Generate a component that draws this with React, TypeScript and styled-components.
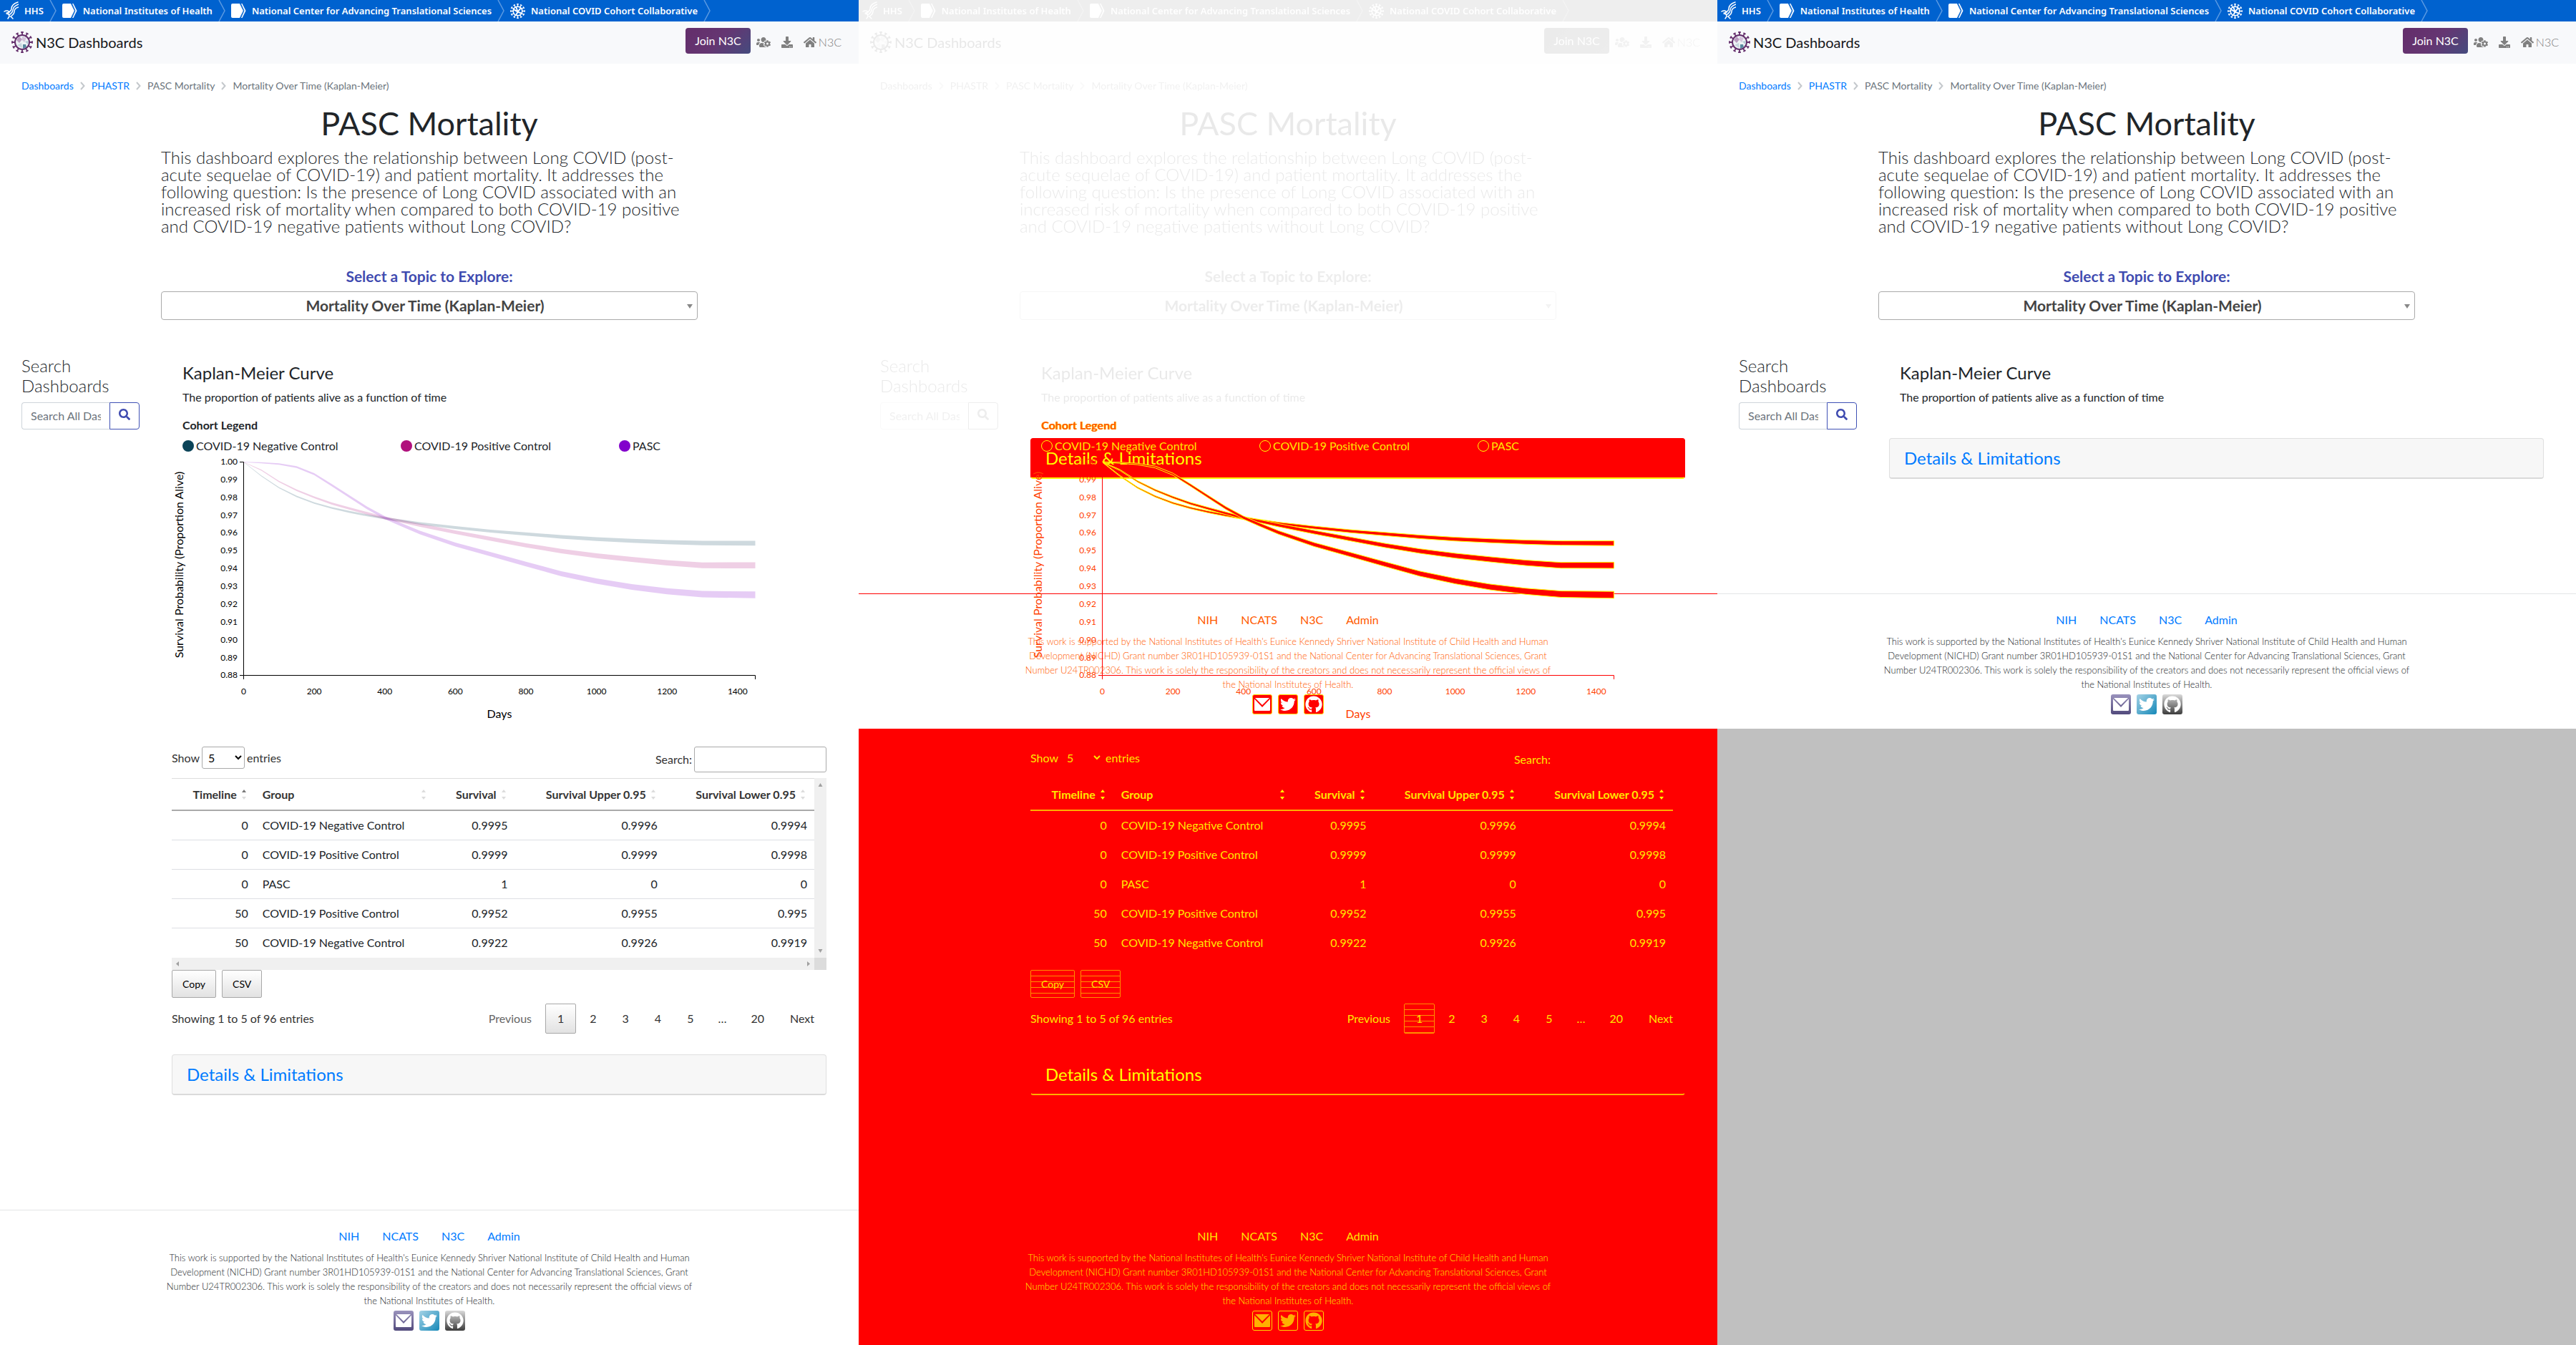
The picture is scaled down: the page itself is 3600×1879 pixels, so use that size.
import React, { useId } from 'react';
import styled, { createGlobalStyle, css, ThemeProvider, useTheme } from 'styled-components';
import { FaUsersCog, FaDownload, FaHome, FaSearch, FaTwitter, FaGithub } from 'react-icons/fa';

/* ---------- tones ---------- */

const plain = {
  ink: '#212529',
  soft: '#333333',
  black: '#000000',
  link: '#007bff',
  muted: '#666666',
  legend: '#212529',
  shadow: 'none',
  line: '#dddddd',
  rowLine: '#dddfe3',
  headLine: '#aaaaaa',
  control: '#aaaaaa',
  controlBg: '#ffffff',
  button: 'linear-gradient(to bottom, #ffffff, #e2e2e2)',
  buttonLine: '#a8a8a8',
  card: '#f7f7f7',
  cardLine: '#dfdfdf',
  cardFoot: '#dadada',
  rule: '#e4e5e6',
  axis: '#000000',
  sort: '#dcdcdc',
  sortOn: '#777777',
  bar: '#f0f0f0',
  barCorner: '#dcdcdc',
  barArrow: '#a0a0a0',
  ribbonOpacity: 0.2,
  ribbonEdge: 'none',
  flat: '',
};

type Tone = typeof plain;

const changed: Tone = {
  ...plain,
  ink: '#ff5a00',
  soft: '#ff5a00',
  black: '#ff4000',
  link: '#ff5a00',
  muted: '#ff5a00',
  legend: '#ffe600',
  shadow: '1px 0 0 #ffe000',
  rule: '#ff0000',
  axis: '#ff0000',
  card: '#ff0000',
  cardLine: '#ff0000',
  cardFoot: '#ffff00',
  ribbonOpacity: 1,
  ribbonEdge: '#ffff00',
  flat: '#ff0000',
};

const missing: Tone = {
  ...changed,
  ink: '#ffe600',
  soft: '#ffe600',
  black: '#ffe600',
  link: '#ffe600',
  muted: '#ffe600',
  shadow: 'none',
  line: 'transparent',
  rowLine: 'transparent',
  headLine: '#ffb000',
  cardFoot: '#ffb000',
  control: 'transparent',
  controlBg: 'transparent',
  button: 'repeating-linear-gradient(to bottom, #ff0000 0 7px, #ff9000 7px 8px)',
  buttonLine: '#ff9000',
  card: 'transparent',
  cardLine: 'transparent',
  rule: 'transparent',
  sort: '#ffff00',
  sortOn: '#ffff00',
  bar: 'transparent',
  barCorner: 'transparent',
  barArrow: 'transparent',
};

const t = (key: keyof Tone) => ({ theme }: { theme: any }) => theme[key];

const Global = createGlobalStyle`
  *, *::before, *::after { box-sizing: border-box; }
  body {
    margin: 0;
    background: #ffffff;
    font-family: Lato, "Open Sans", "Liberation Sans", sans-serif;
    font-size: 16px;
    line-height: 24px;
    color: #212529;
  }
  h1, h2, h3, p, ul, ol { margin: 0; padding: 0; font-weight: 400; }
  a { text-decoration: none; }
  button, input, select { font: inherit; margin: 0; }
`;

/* ---------- frame ---------- */

const Board = styled.main`
  display: grid;
  grid-template-columns: repeat(3, minmax(0, 1fr));
  min-height: 100vh;
`;

const Panel = styled.section`
  display: flex;
  flex-direction: column;
`;

const Stack = styled.section`
  display: grid;
  grid-template-columns: minmax(0, 1fr);
  & > * { grid-area: 1 / 1; }
`;

const Filler = styled.div<{ $color: string }>`
  flex: 1;
  background: ${p => p.$color};
`;

const Part = styled.div<{ $look: 'shown' | 'ghost' | 'hidden' }>`
  ${p => p.$look === 'ghost' && css`filter: grayscale(1) opacity(0.1);`}
  ${p => p.$look === 'hidden' && css`visibility: hidden;`}
`;

/* ---------- agency bar ---------- */

const AgencyBar = styled.nav`
  display: flex;
  height: 30px;
  background: #0062cf;
  overflow: hidden;
`;

const Agency = styled.a`
  display: flex;
  align-items: center;
  gap: 8px;
  padding-left: 8px;
  color: #ffffff;
  font: 600 13px/18px "Noto Sans", "Open Sans", sans-serif;
  white-space: nowrap;
  &:first-child { padding-left: 5px; }
`;

const Divider = () => (
  <svg width="10" height="30" viewBox="0 0 10 30" fill="none" stroke="#5b9ae2" strokeWidth="1.5">
    <path d="M1 0 9 15 1 30" />
  </svg>
);

const Eagle = () => (
  <svg width="21" height="26" viewBox="0 0 21 26" fill="none" stroke="#fff" strokeWidth="1.5" strokeLinecap="round">
    <path d="M20 1C14 3 11 6 11 10c0 3-2 4-4 5" />
    <path d="M21 4c-5 2-8 4-8 8 0 3-2 4-4 6" />
    <path d="M21 8c-4 1-6 3-6 6s-2 5-5 7" />
    <path d="M1 14c3-2 6-1 7 1l-3 1c2 1 3 3 3 5l-2 3" />
    <path d="M10 21l3 3M4 17l4 1" />
  </svg>
);

const Tag = () => (
  <svg width="21" height="20" viewBox="0 0 21 20">
    <path d="M0 2Q0 0 2 0H12L17 10 12 20H2Q0 20 0 18Z" fill="#fff" />
    <path d="M14 0H15.500L20.500 10 15.500 20H14L18.500 10Z" fill="#fff" />
    <path d="M12.500 0 17.500 10 12.500 20" fill="none" stroke="#2f7fd8" />
  </svg>
);

const spokes = Array.from({ length: 12 }, (_, i) => i * 30);

const WhiteVirus = () => (
  <svg width="21" height="21" viewBox="-10 -10 20 20" stroke="#fff" fill="none">
    {spokes.map(a => (
      <path key={a} d="M0-6V-9M-1.300-9.300H1.300" transform={`rotate(${a})`} strokeWidth="1.300" />
    ))}
    <circle r="6" strokeWidth="1.500" />
    <path d="M-5-2 0 1 4-4M0 1-2 5M0 1 5 3M-2-5 0 1" strokeWidth="1.800" />
  </svg>
);

const VirusLogo = () => (
  <svg width="30" height="30" viewBox="-15 -15 30 30" stroke="#642f6c" fill="none">
    {spokes.map(a => (
      <path key={a} d="M0-10V-14M-1.800-14H1.800" transform={`rotate(${a})`} strokeWidth="1.800" />
    ))}
    <circle r="10" strokeWidth="2" fill="#eef3f5" />
    <path d="M-8-3-4-8 0-4-4 1Z" fill="#b99cc0" stroke="none" />
    <path d="M0-8 6-6 3 0 0-3Z" fill="#d3c2da" stroke="none" />
    <path d="M-7 4-1 1 0 8Z" fill="#c6d7de" stroke="none" />
    <path d="M1 3 5 3 6 7 1 9Z" fill="#5a8aa0" stroke="none" />
    <path d="M4-1 9-2 8 3Z" fill="#b5cad6" stroke="none" />
  </svg>
);

/* ---------- site bar ---------- */

const SiteBar = styled.header`
  display: flex;
  align-items: flex-start;
  justify-content: space-between;
  height: 59px;
  padding: 9px 24px 0 16px;
  background: #f8f9fb;
`;

const Brand = styled.a`
  display: flex;
  align-items: center;
  gap: 4px;
  padding-top: 5px;
  color: #16181b;
  font-size: 20px;
  line-height: 30px;
`;

const SiteLinks = styled.div`
  display: flex;
  align-items: center;
`;

const Join = styled.button`
  height: 36px;
  padding: 0 13px;
  margin-right: 8px;
  border: 0;
  border-radius: 4px;
  background: linear-gradient(135deg, #642f6c 10%, #653672 50%, #454b7e);
  color: #ffffff;
`;

const SiteLink = styled.a`
  display: flex;
  align-items: center;
  gap: 3px;
  padding-top: 3px;
  margin-right: 15px;
  color: #808080;
  font-weight: 300;
  &:last-child { margin-right: 0; }
`;

/* ---------- intro ---------- */

const Crumbs = styled.ol`
  display: flex;
  align-items: center;
  gap: 9px;
  padding: 20px 30px 0;
  list-style: none;
  font-size: 14px;
  line-height: 21px;
  color: #6c757d;
  li { display: flex; align-items: center; gap: 9px; }
  a { color: #007bff; }
`;

const CrumbArrow = () => (
  <svg width="7" height="12" viewBox="0 0 7 12" fill="none" stroke="#c4c8cc" strokeWidth="2">
    <path d="M1 1 5.500 6 1 11" />
  </svg>
);

const Intro = styled.div`
  max-width: 750px;
  margin: 0 auto;
  padding-top: 15px;
`;

const Title = styled.h1`
  text-align: center;
  font-size: 45px;
  line-height: 54px;
`;

const Lede = styled.p`
  padding-top: 9px;
  font-size: 24px;
  line-height: 24px;
  font-weight: 300;
`;

const TopicLabel = styled.label`
  display: block;
  padding: 46px 0 9px;
  text-align: center;
  font-size: 21px;
  font-weight: 700;
  color: #3f4bb0;
`;

const TopicBox = styled.div`
  position: relative;
  svg { position: absolute; right: 7px; top: 18px; pointer-events: none; }
`;

const TopicSelect = styled.select`
  width: 100%;
  height: 40px;
  padding: 0 20px 0 8px;
  appearance: none;
  border: 1px solid #aaaaaa;
  border-radius: 4px;
  background: #ffffff;
  text-align-last: center;
  font-size: 21px;
  font-weight: 700;
  color: #444444;
`;

/* ---------- body columns ---------- */

const Columns = styled.div`
  display: grid;
  grid-template-columns: 165px minmax(0, 1fr);
  gap: 45px;
  padding: 50px 45px 0 30px;
`;

const SearchTitle = styled.h2`
  font-size: 24px;
  line-height: 28px;
  font-weight: 300;
  padding-bottom: 9px;
`;

const SearchRow = styled.div`
  display: flex;
  height: 38px;
`;

const SearchInput = styled.input`
  flex: 1;
  min-width: 0;
  padding: 0 12px;
  border: 1px solid #ced4da;
  border-right: 0;
  border-radius: 4px 0 0 4px;
  &::placeholder { color: #6c757d; opacity: 1; }
`;

const SearchButton = styled.button`
  width: 42px;
  padding: 0;
  border: 1px solid #3f51b5;
  border-radius: 0 4px 4px 0;
  background: #ffffff;
  color: #3f4bb0;
`;

const Lead = styled.div`
  padding: 9px 15px 0;
`;

const ChartTitle = styled.h3`
  font-size: 24px;
  line-height: 29px;
  padding-bottom: 8px;
`;

const LegendBox = styled.div`
  padding: 14px 0 0 15px;
  color: ${t('ink')};
`;

const LegendTitle = styled.p`
  font-weight: 700;
  text-shadow: ${t('shadow')};
`;

const LegendList = styled.ul`
  display: grid;
  grid-template-columns: repeat(3, 305px);
  padding-top: 5px;
  list-style: none;
  color: ${t('legend')};
  li { display: flex; align-items: center; gap: 3px; }
`;

const Dot = styled.span<{ $color: string }>`
  width: 16px;
  height: 16px;
  border-radius: 8px;
  background: ${p => p.theme.flat || p.$color};
  ${p => p.theme.flat && css`border: 1px solid #ffff00;`}
`;

const ChartSvg = styled.svg`
  display: block;
  width: 100%;
  height: auto;
  margin-bottom: 31px;
  font-family: Lato, sans-serif;
`;

/* ---------- chart ---------- */

const days = [0, 50, 100, 150, 200, 250, 300, 350, 400, 450, 500, 600, 700, 800, 900, 1000, 1100, 1200, 1300, 1450];

const cohorts = [
  { name: 'COVID-19 Negative Control', color: '#0b4358', spread: 6,
    v: [1, 0.9922, 0.9856, 0.9807, 0.977, 0.9742, 0.972, 0.9701, 0.9684, 0.967, 0.9655, 0.9632, 0.9612, 0.9596, 0.958, 0.9567, 0.9558, 0.955, 0.9545, 0.9544] },
  { name: 'COVID-19 Positive Control', color: '#b0107c', spread: 8,
    v: [1, 0.9955, 0.9891, 0.9842, 0.9802, 0.9767, 0.9739, 0.9712, 0.9686, 0.9666, 0.9645, 0.9606, 0.9569, 0.9532, 0.95, 0.9474, 0.9453, 0.9434, 0.942, 0.942] },
  { name: 'PASC', color: '#8200cc', spread: 9,
    v: [1, 0.9996, 0.9989, 0.9972, 0.9932, 0.987, 0.9806, 0.9742, 0.9688, 0.9645, 0.9604, 0.9537, 0.9482, 0.9427, 0.9373, 0.9331, 0.9298, 0.9274, 0.9258, 0.9254] },
];

const xAt = (d: number) => 100.5 + d * 0.4931;
const yAt = (v: number) => 10.5 + (1 - v) * 2487;

const ribbon = (v: number[], spread: number) => {
  const half = (i: number) => 0.3 + (spread / 2) * Math.pow(days[i] / 1450, 0.7);
  const top = v.map((y, i) => `${xAt(days[i]).toFixed(1)},${(yAt(y) - half(i)).toFixed(1)}`);
  const low = v.map((y, i) => `${xAt(days[i]).toFixed(1)},${(yAt(y) + half(i)).toFixed(1)}`).reverse();
  return [...top, ...low].join(' ');
};

const Chart = () => {
  const tone = useTheme() as Tone;
  return (
    <ChartSvg viewBox="0 0 915 377" role="img" aria-label="Kaplan-Meier survival curves">
      {cohorts.map(c => (
        <polygon key={c.name} points={ribbon(c.v, c.spread)} fill={tone.flat || c.color}
          fillOpacity={tone.ribbonOpacity} stroke={tone.ribbonEdge} />
      ))}
      <path d="M95 10.500H100.500V308.500H95M100.500 314V308.500H815.500V314" fill="none" stroke={tone.axis} />
      <g fontSize="12" fill={tone.black}>
        {Array.from({ length: 13 }, (_, i) => (
          <text key={i} x="92" y={14 + i * 24.87} textAnchor="end">{(1 - i / 100).toFixed(2)}</text>
        ))}
        {Array.from({ length: 8 }, (_, i) => (
          <text key={i} x={xAt(i * 200)} y="335" textAnchor="middle">{i * 200}</text>
        ))}
      </g>
      <g fontSize="16" fill={tone.black} textAnchor="middle">
        <text x="458" y="368">Days</text>
        <text transform="translate(16 154) rotate(-90)">Survival Probability (Proportion Alive)</text>
      </g>
    </ChartSvg>
  );
};

/* ---------- table ---------- */

const Tools = styled.div`
  display: flex;
  justify-content: space-between;
  align-items: flex-start;
  padding-bottom: 8px;
  color: ${t('soft')};
  label { display: flex; align-items: center; gap: 3px; }
`;

const CountSelect = styled.select`
  width: 60px;
  height: 31px;
  padding: 4px;
  border: 1px solid ${t('control')};
  border-radius: 3px;
  background: ${t('controlBg')};
  color: ${t('black')};
`;

const FilterInput = styled.input`
  width: 185px;
  height: 36px;
  padding: 5px;
  border: 1px solid ${t('control')};
  border-radius: 3px;
  background: ${t('controlBg')};
`;

const Scroller = styled.div`
  display: grid;
  grid-template-columns: minmax(0, 1fr) 17px;
  grid-template-rows: auto 17px;
`;

const Track = styled.div<{ $row?: boolean }>`
  display: flex;
  flex-direction: ${p => (p.$row ? 'row' : 'column')};
  justify-content: space-between;
  align-items: center;
  padding: ${p => (p.$row ? '0 5px' : '6px 0')};
  background: ${t('bar')};
  color: ${t('barArrow')};
`;

const TrackCorner = styled.div`
  background: ${t('barCorner')};
`;

const Arrow = ({ d }: { d: string }) => (
  <svg width="7" height="7" viewBox="0 0 7 7" fill="currentColor"><path d={d} /></svg>
);

const Table = styled.table`
  width: 100%;
  table-layout: fixed;
  border-collapse: separate;
  border-spacing: 0;
  border-top: 1px solid ${t('line')};
  color: ${t('ink')};
`;

const Th = styled.th<{ $w: string; $left?: boolean }>`
  width: ${p => p.$w};
  height: 45px;
  padding: 0 12px 0 10px;
  border-bottom: 2px solid ${t('headLine')};
  font-weight: 700;
  color: ${t('soft')};
  & > span {
    display: flex;
    align-items: center;
    gap: 6px;
    justify-content: ${p => (p.$left ? 'space-between' : 'flex-end')};
    white-space: nowrap;
  }
`;

const Td = styled.td<{ $left?: boolean }>`
  height: 41px;
  padding: 0 10px;
  border-bottom: 1px solid ${t('rowLine')};
  text-align: ${p => (p.$left ? 'left' : 'right')};
  tr:last-child > & { border-bottom-color: transparent; }
`;

const Sort = ({ on }: { on?: boolean }) => {
  const tone = useTheme() as Tone;
  return (
    <svg width="8" height="14" viewBox="0 0 8 14">
      <path d="M4 0 7 4H1Z" fill={on ? tone.sortOn : tone.sort} />
      <path d="M4 14 1 10H7Z" fill={tone.sort} />
    </svg>
  );
};

const columns = [
  { name: 'Timeline', w: '13%', on: true },
  { name: 'Group', w: '28%', left: true },
  { name: 'Survival', w: '12.4%' },
  { name: 'Survival Upper 0.95', w: '23.3%' },
  { name: 'Survival Lower 0.95', w: '23.3%' },
];

const rows = [
  ['0', 'COVID-19 Negative Control', '0.9995', '0.9996', '0.9994'],
  ['0', 'COVID-19 Positive Control', '0.9999', '0.9999', '0.9998'],
  ['0', 'PASC', '1', '0', '0'],
  ['50', 'COVID-19 Positive Control', '0.9952', '0.9955', '0.995'],
  ['50', 'COVID-19 Negative Control', '0.9922', '0.9926', '0.9919'],
];

const Exports = styled.div`
  display: flex;
  gap: 8px;
  padding-bottom: 8px;
`;

const ExportButton = styled.button`
  height: 39px;
  padding: 0 14px;
  border: 1px solid ${t('buttonLine')};
  border-radius: 2px;
  background: ${t('button')};
  color: ${t('black')};
  font-size: 14px;
`;

const Foot = styled.div`
  display: flex;
  align-items: center;
  justify-content: space-between;
  color: ${t('soft')};
`;

const Pager = styled.div`
  display: flex;
  gap: 2px;
  align-items: center;
`;

const Ellipsis = styled.span`
  padding: 0 15px;
`;

const PageButton = styled.button<{ $on?: boolean; $dim?: boolean }>`
  height: 42px;
  padding: 0 16px;
  border: 1px solid ${p => (p.$on ? p.theme.buttonLine : 'transparent')};
  border-radius: 2px;
  background: ${p => (p.$on ? p.theme.button : 'transparent')};
  color: ${p => (p.$dim ? p.theme.muted : p.theme.soft)};
`;

const DataTable = () => {
  const id = useId();
  return (
    <>
      <Tools>
        <label htmlFor={`${id}-n`}>
          Show
          <CountSelect id={`${id}-n`} defaultValue="5"><option>5</option><option>10</option></CountSelect>
          entries
        </label>
        <label htmlFor={`${id}-f`}>Search:<FilterInput id={`${id}-f`} /></label>
      </Tools>
      <Scroller>
        <Table>
          <thead>
            <tr>
              {columns.map(c => (
                <Th key={c.name} $w={c.w} $left={c.left}><span>{c.name}<Sort on={c.on} /></span></Th>
              ))}
            </tr>
          </thead>
          <tbody>
            {rows.map((r, i) => (
              <tr key={i}>{r.map((v, j) => <Td key={j} $left={j === 1}>{v}</Td>)}</tr>
            ))}
          </tbody>
        </Table>
        <Track><Arrow d="M3.500 1 6.500 6H.5Z" /><Arrow d="M3.500 6 6.500 1H.5Z" /></Track>
        <Track $row><Arrow d="M1 3.500 5 0V7Z" /><Arrow d="M6 3.500 2 0V7Z" /></Track>
        <TrackCorner />
      </Scroller>
      <Exports>
        <ExportButton type="button">Copy</ExportButton>
        <ExportButton type="button">CSV</ExportButton>
      </Exports>
      <Foot>
        <span>Showing 1 to 5 of 96 entries</span>
        <Pager>
          <PageButton $dim>Previous</PageButton>
          <PageButton $on>1</PageButton>
          {['2', '3', '4', '5'].map(n => <PageButton key={n}>{n}</PageButton>)}
          <Ellipsis>…</Ellipsis>
          <PageButton>20</PageButton>
          <PageButton>Next</PageButton>
        </Pager>
      </Foot>
    </>
  );
};

/* ---------- details card and footer ---------- */

const Indent = styled.div`
  padding: 0 45px 0 240px;
`;

const Card = styled.div<{ $gap: string }>`
  margin-top: ${p => p.$gap};
  padding: 12px 20px;
  border: 1px solid ${t('cardLine')};
  border-bottom: 2px solid ${t('cardFoot')};
  border-radius: 4px;
  background: ${t('card')};
  a { font-size: 24px; line-height: 29px; color: ${p => (p.theme.flat ? '#ffff00' : p.theme.link)}; }
`;

const Footer = styled.footer`
  display: flex;
  flex-direction: column;
  align-items: center;
  margin-top: 160px;
  padding: 24px 20px 20px;
  border-top: 1px solid ${t('rule')};
  color: ${t('ink')};
`;

const FooterLinks = styled.nav`
  display: flex;
  gap: 32px;
  padding-bottom: 8px;
  a { color: ${t('link')}; }
`;

const Funding = styled.p`
  max-width: 740px;
  text-align: center;
  font-size: 13px;
  line-height: 20px;
  font-weight: 300;
`;

const Social = styled.div`
  display: flex;
  gap: 8px;
  padding-top: 4px;
`;

const SocialLink = styled.a<{ $fill: string }>`
  display: flex;
  align-items: center;
  justify-content: center;
  width: 28px;
  height: 28px;
  border-radius: 3px;
  background: ${p => p.theme.flat || p.$fill};
  color: ${p => (p.theme.rule === 'transparent' ? '#ffb000' : '#ffffff')};
  ${p => p.theme.flat && css`border: 1px solid #ffd800;`}
`;

const Envelope = () => (
  <svg width="22" height="18" viewBox="0 0 22 18" fill="currentColor">
    <path d="M1 0H21L11 10Z" />
    <path d="M0 1.500 11 13 22 1.500V17Q22 18 21 18H1Q0 18 0 17Z" />
  </svg>
);

const PageFooter = () => (
  <Footer>
    <FooterLinks>
      <a href="#nih">NIH</a>
      <a href="#ncats">NCATS</a>
      <a href="#n3c">N3C</a>
      <a href="#admin">Admin</a>
    </FooterLinks>
    <Funding>
      This work is supported by the National Institutes of Health's Eunice Kennedy Shriver National Institute of Child
      Health and Human Development (NICHD) Grant number 3R01HD105939-01S1 and the National Center for Advancing
      Translational Sciences, Grant Number U24TR002306. This work is solely the responsibility of the creators and does
      not necessarily represent the official views of the National Institutes of Health.
    </Funding>
    <Social>
      <SocialLink href="#mail" aria-label="Email" $fill="linear-gradient(#9a93bd, #524a7c)"><Envelope /></SocialLink>
      <SocialLink href="#twitter" aria-label="Twitter" $fill="linear-gradient(135deg, #a5d3e6, #1588b8)"><FaTwitter size={22} /></SocialLink>
      <SocialLink href="#github" aria-label="GitHub" $fill="linear-gradient(#dadada, #3c3c3c)"><FaGithub size={24} /></SocialLink>
    </Social>
  </Footer>
);

/* ---------- page ---------- */

const Top = () => {
  const id = useId();
  return (
    <>
      <AgencyBar>
        <Agency href="#hhs"><Eagle />HHS<Divider /></Agency>
        <Agency href="#nih"><Tag />National Institutes of Health<Divider /></Agency>
        <Agency href="#ncats"><Tag />National Center for Advancing Translational Sciences<Divider /></Agency>
        <Agency href="#n3c"><WhiteVirus />National COVID Cohort Collaborative<Divider /></Agency>
      </AgencyBar>
      <SiteBar>
        <Brand href="#home"><VirusLogo />N3C Dashboards</Brand>
        <SiteLinks>
          <Join type="button">Join N3C</Join>
          <SiteLink href="#team" aria-label="Team"><FaUsersCog size={20} /></SiteLink>
          <SiteLink href="#download" aria-label="Downloads"><FaDownload size={16} /></SiteLink>
          <SiteLink href="#n3c-home"><FaHome size={18} />N3C</SiteLink>
        </SiteLinks>
      </SiteBar>
      <Crumbs>
        <li><a href="#dashboards">Dashboards</a><CrumbArrow /></li>
        <li><a href="#phastr">PHASTR</a><CrumbArrow /></li>
        <li>PASC Mortality<CrumbArrow /></li>
        <li>Mortality Over Time (Kaplan-Meier)</li>
      </Crumbs>
      <Intro>
        <Title>PASC Mortality</Title>
        <Lede>
          This dashboard explores the relationship between Long COVID (post-acute sequelae of COVID-19) and patient
          mortality. It addresses the following question: Is the presence of Long COVID associated with an increased
          risk of mortality when compared to both COVID-19 positive and COVID-19 negative patients without Long COVID?
        </Lede>
        <TopicLabel htmlFor={`${id}-topic`}>Select a Topic to Explore:</TopicLabel>
        <TopicBox>
          <TopicSelect id={`${id}-topic`}><option>Mortality Over Time (Kaplan-Meier)</option></TopicSelect>
          <svg width="8" height="6" viewBox="0 0 8 6"><path d="M0 0H8L4 6Z" fill="#888" /></svg>
        </TopicBox>
      </Intro>
      <Columns>
        <div>
          <SearchTitle>Search Dashboards</SearchTitle>
          <SearchRow>
            <SearchInput aria-label="Search All Dashboards" placeholder="Search All Dashboards" />
            <SearchButton type="button" aria-label="Search"><FaSearch size={16} /></SearchButton>
          </SearchRow>
        </div>
        <Lead>
          <ChartTitle>Kaplan-Meier Curve</ChartTitle>
          <p>The proportion of patients alive as a function of time</p>
        </Lead>
      </Columns>
    </>
  );
};

/* The search column runs lower than the chart heading, so the legend block is pulled up beside it. */
const Beside = styled(Indent)`
  margin-top: -32px;
`;

const FullPage = ({ look, chartTone, tableTone }: { look: 'shown' | 'ghost'; chartTone: Tone; tableTone: Tone }) => (
  <div>
    <Part $look={look}><Top /></Part>
    <Beside>
      <ThemeProvider theme={chartTone}>
        <LegendBox>
          <LegendTitle>Cohort Legend</LegendTitle>
          <LegendList>
            {cohorts.map(c => <li key={c.name}><Dot $color={c.color} />{c.name}</li>)}
          </LegendList>
        </LegendBox>
        <Chart />
      </ThemeProvider>
      <ThemeProvider theme={tableTone}>
        <DataTable />
        <Card $gap="29px"><a href="#details">Details &amp; Limitations</a></Card>
      </ThemeProvider>
    </Beside>
    <ThemeProvider theme={tableTone}><PageFooter /></ThemeProvider>
  </div>
);

const ShortPage = ({ look, tone, fill }: { look: 'shown' | 'hidden'; tone: Tone; fill: string }) => (
  <Panel>
    <Part $look={look}><Top /></Part>
    <ThemeProvider theme={tone}>
      <Beside><Card $gap="44px"><a href="#details">Details &amp; Limitations</a></Card></Beside>
      <PageFooter />
    </ThemeProvider>
    <Filler $color={fill} />
  </Panel>
);

export default function App() {
  return (
    <ThemeProvider theme={plain}>
      <Global />
      <Board>
        <FullPage look="shown" chartTone={plain} tableTone={plain} />
        <Stack>
          <ShortPage look="hidden" tone={changed} fill="#ff0000" />
          <FullPage look="ghost" chartTone={changed} tableTone={missing} />
        </Stack>
        <ShortPage look="shown" tone={plain} fill="#c0c0c0" />
      </Board>
    </ThemeProvider>
  );
}
